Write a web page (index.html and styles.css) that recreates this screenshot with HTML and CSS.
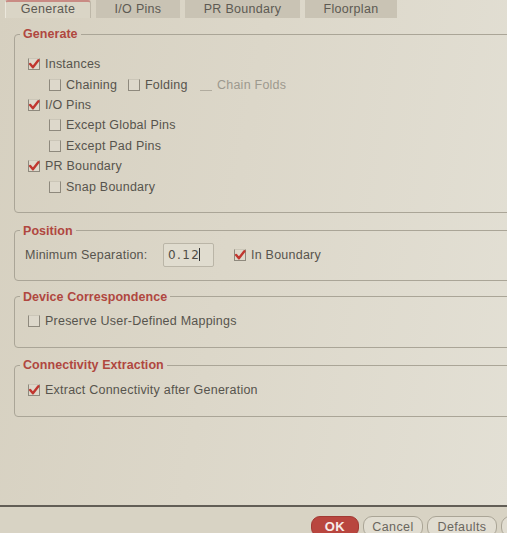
FILE: index.html
```html
<!DOCTYPE html>
<html>
<head>
<meta charset="utf-8">
<link rel="stylesheet" href="styles.css">
</head>
<body>
<div class="dialog">
  <div class="tabs">
    <div class="tab active w-gen">Generate</div>
    <div class="tab w-io">I/O Pins</div>
    <div class="tab w-pr">PR Boundary</div>
    <div class="tab w-fp">Floorplan</div>
  </div>
  <div class="panel">
    <fieldset class="group g-generate">
      <legend>Generate</legend>
      <div class="row"><span class="cb checked"><svg viewBox="0 0 11 11"><path d="M2 5.5 L4.5 8.5 L9.5 2"/></svg></span><span class="lbl">Instances</span></div>
      <div class="row indent">
        <span class="item w-chain"><span class="cb"></span><span class="lbl">Chaining</span></span>
        <span class="item w-fold"><span class="cb"></span><span class="lbl">Folding</span></span>
        <span class="item"><span class="cb disabled"></span><span class="lbl dim">Chain Folds</span></span>
      </div>
      <div class="row"><span class="cb checked"><svg viewBox="0 0 11 11"><path d="M2 5.5 L4.5 8.5 L9.5 2"/></svg></span><span class="lbl">I/O Pins</span></div>
      <div class="row indent"><span class="cb"></span><span class="lbl">Except Global Pins</span></div>
      <div class="row indent"><span class="cb"></span><span class="lbl">Except Pad Pins</span></div>
      <div class="row"><span class="cb checked"><svg viewBox="0 0 11 11"><path d="M2 5.5 L4.5 8.5 L9.5 2"/></svg></span><span class="lbl">PR Boundary</span></div>
      <div class="row indent"><span class="cb"></span><span class="lbl">Snap Boundary</span></div>
    </fieldset>

    <fieldset class="group g-position">
      <legend>Position</legend>
      <div class="row pos-row">
        <span class="lbl field-label">Minimum Separation:</span>
        <span class="input"><span class="val">0.12</span><span class="caret"></span></span>
        <span class="item"><span class="cb checked"><svg viewBox="0 0 11 11"><path d="M2 5.5 L4.5 8.5 L9.5 2"/></svg></span><span class="lbl">In Boundary</span></span>
      </div>
    </fieldset>

    <fieldset class="group g-device">
      <legend>Device Correspondence</legend>
      <div class="row"><span class="cb"></span><span class="lbl">Preserve User-Defined Mappings</span></div>
    </fieldset>

    <fieldset class="group g-conn">
      <legend>Connectivity Extraction</legend>
      <div class="row"><span class="cb checked"><svg viewBox="0 0 11 11"><path d="M2 5.5 L4.5 8.5 L9.5 2"/></svg></span><span class="lbl">Extract Connectivity after Generation</span></div>
    </fieldset>
  </div>
  <div class="footer">
    <button class="btn ok w-ok">OK</button>
    <button class="btn w-cancel">Cancel</button>
    <button class="btn w-def">Defaults</button>
    <button class="btn w-apply" aria-label="Apply"></button>
  </div>
</div>
</body>
</html>
```
FILE: styles.css
```css
html, body {
  margin: 0;
  padding: 0;
}
body {
  width: 507px;
  height: 533px;
  overflow: hidden;
  font-family: "Liberation Sans", Arial, sans-serif;
  font-size: 12.5px;
  color: #57544d;
  background: linear-gradient(100deg, #d6d0c0 0%, #dcd7c9 45%, #e3e0d5 100%);
}
.dialog {
  height: 533px;
  display: flex;
  flex-direction: column;
}
.tabs {
  display: flex;
  gap: 5px;
  padding-left: 5px;
  height: 18px;
  flex: none;
}
.tab {
  box-sizing: border-box;
  height: 18px;
  background: #c9c3b4;
  color: #5d5a53;
  text-align: center;
  line-height: 18px;
  letter-spacing: 0.3px;
}
.tab.active {
  background: #dad5c6;
  border-top: 2px solid #c98b84;
  border-left: 1px solid #ebe7dc;
  border-right: 1px solid #bdb7a8;
  border-radius: 3px 3px 0 0;
  line-height: 15px;
}
.w-gen { width: 86px; }
.w-io { width: 84px; }
.w-pr { width: 115px; }
.w-fp { width: 92px; }

.panel {
  flex: 1;
  padding-top: 9px;
}
.group {
  margin: 0 -20px 0 14px;
  padding: 0 0 0 13px;
  border: 1px solid #aaa597;
  border-radius: 4px;
  min-width: 0;
}
.group legend {
  font-weight: bold;
  color: #b0473f;
  padding: 0 3px;
  margin-left: -8px;
  line-height: 14px;
  letter-spacing: 0.05px;
}
.g-generate { padding-top: 13px; padding-bottom: 15px; }
.g-position { margin-top: 11px; padding-top: 5px; padding-bottom: 13px; }
.g-device { margin-top: 9px; padding-top: 7px; padding-bottom: 16px; }
.g-conn { margin-top: 10px; padding-top: 8px; padding-bottom: 15px; }

.row {
  display: flex;
  align-items: center;
  height: 20.4px;
  white-space: nowrap;
}
.row.indent { padding-left: 21px; }
.item {
  display: flex;
  align-items: center;
}
.w-chain { width: 79px; }
.w-fold { width: 72px; }

.cb {
  box-sizing: border-box;
  width: 12px;
  height: 12px;
  flex: none;
  margin-right: 5px;
  background: #ddd8cb;
  border: 1px solid #8e897d;
  border-top-color: #cbc6b8;
  position: relative;
}
.cb svg {
  position: absolute;
  left: -1px;
  top: -1px;
  width: 12px;
  height: 12px;
  fill: none;
  stroke: #c0362f;
  stroke-width: 2.2;
  stroke-linecap: round;
  stroke-linejoin: round;
}
.cb.disabled {
  background: transparent;
  border: none;
  border-bottom: 1px solid #b1ac9f;
}
.lbl { letter-spacing: 0.23px; }
.lbl.dim { color: #9d998e; }

.pos-row {
  margin-left: -3px;
  height: 24px;
}
.field-label { width: 138px; }
.input {
  box-sizing: border-box;
  width: 51px;
  height: 24px;
  margin-right: 20px;
  border: 1px solid #bab5a7;
  border-radius: 2px;
  background: #e0dccf;
  display: flex;
  align-items: center;
  padding-left: 4px;
  color: #4f4c46;
}
.val { letter-spacing: 1.4px; font-family: "DejaVu Sans", sans-serif; font-size: 12px; }
.caret {
  width: 1px;
  height: 13px;
  background: #333;
  margin-left: -1px;
}

.footer {
  flex: none;
  border-top: 2px solid #625e56;
  padding: 9px 0 0 311px;
  height: 17px;
  display: flex;
  gap: 4px;
  overflow: hidden;
  background: #d8d3c4;
}
.btn {
  flex: none;
  box-sizing: border-box;
  height: 21px;
  border-radius: 9px;
  border: 1px solid #aaa596;
  background: #e1ddd1;
  color: #6a665e;
  font-family: "Liberation Sans", Arial, sans-serif;
  font-size: 12.5px;
  letter-spacing: 0.4px;
  padding: 0;
  line-height: 18px;
}
.btn.ok {
  background: #b9463f;
  border-color: #a23a34;
  color: #f7ece9;
  font-weight: bold;
  font-size: 13px;
}
.w-ok { width: 48px; }
.w-cancel { width: 60px; }
.w-def { width: 70px; }
.w-apply { width: 60px; }
```
